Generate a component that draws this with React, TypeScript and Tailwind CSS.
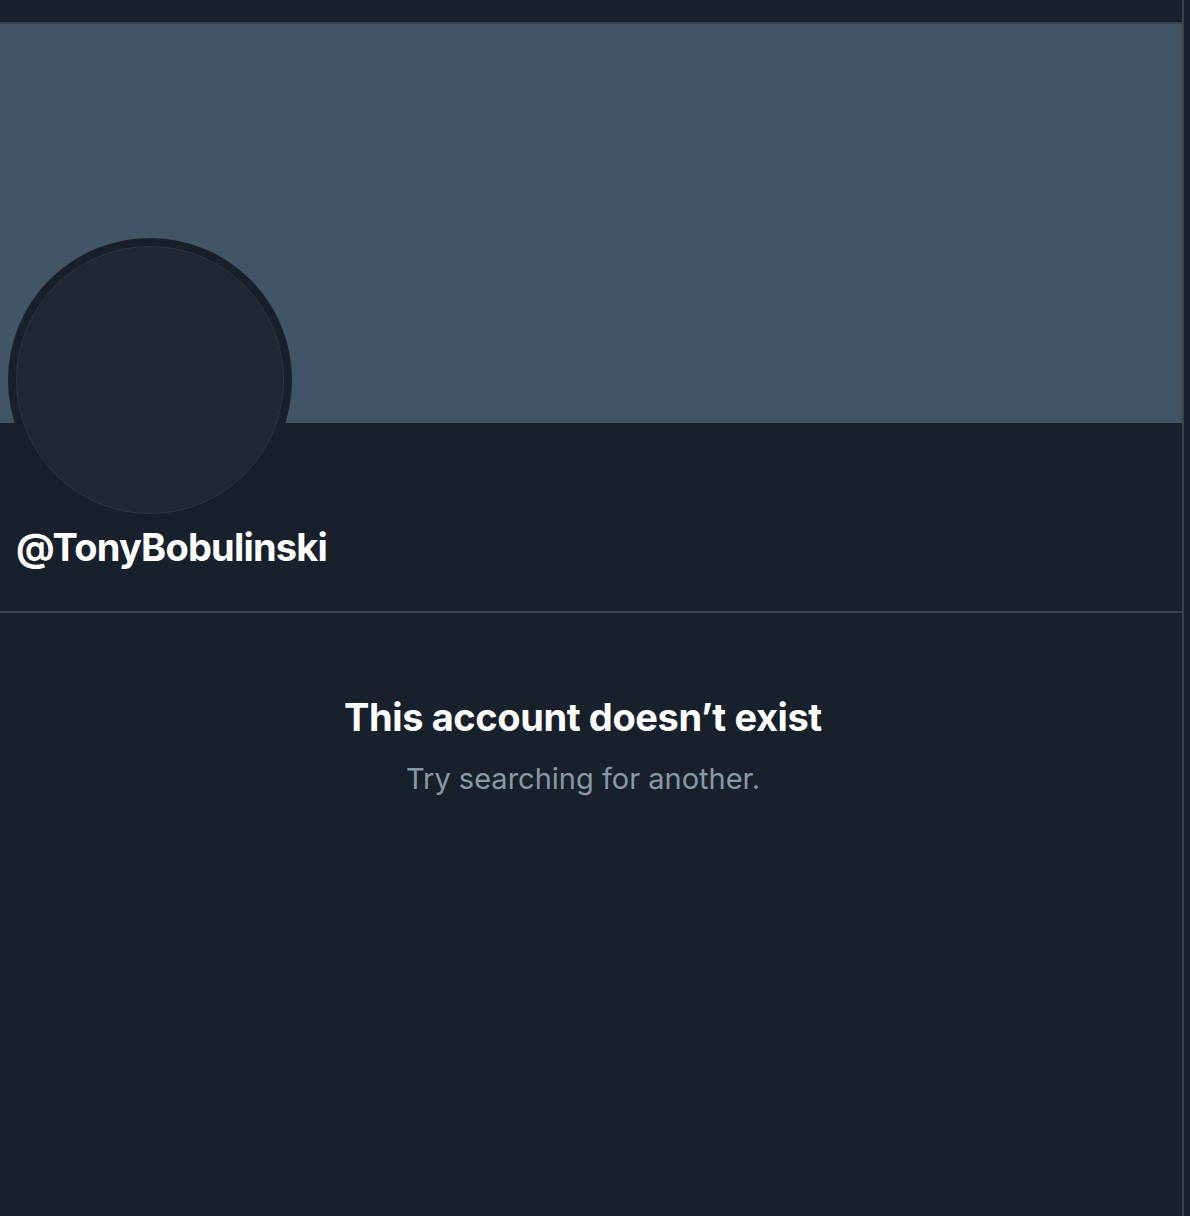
export default function App() {
  return (
    <div
      className="flex min-h-[1216px] w-[1190px] bg-[#18202b] text-white"
      style={{ fontFamily: "Inter, 'Liberation Sans', sans-serif" }}
    >
      <main className="flex w-[1182px] flex-col">
        <div className="h-[24px] border-b-2 border-[#38444d] bg-[#18202b]" />
        <div className="h-[399px] bg-[#425566]" />

        <section className="px-[8px]">
          <div className="-mt-[185px] h-[284px] w-[284px] rounded-full bg-[#18202b] p-[8px]">
            <div className="h-full w-full rounded-full border border-[#2c3640] bg-[#1e2732]" />
          </div>
          <h1 className="mt-[1px] pl-[8px] text-[38px] font-bold leading-[48px] tracking-[-0.8px]">
            @TonyBobulinski
          </h1>
        </section>

        <div className="mt-[40px] h-[2px] bg-[#38444d]" />

        <div className="flex flex-col items-center pr-[16px] pt-[80px]">
          <h2 className="text-[38px] font-bold leading-[48px] tracking-[-0.4px]">
            This account doesn’t exist
          </h2>
          <p className="mt-[18px] text-[29px] leading-[40px] text-[#8899a6]">
            Try searching for another.
          </p>
        </div>
      </main>
      <div className="w-[2px] bg-[#38444d]" />
      <div className="flex-1 bg-[#18202b]" />
    </div>
  );
}
